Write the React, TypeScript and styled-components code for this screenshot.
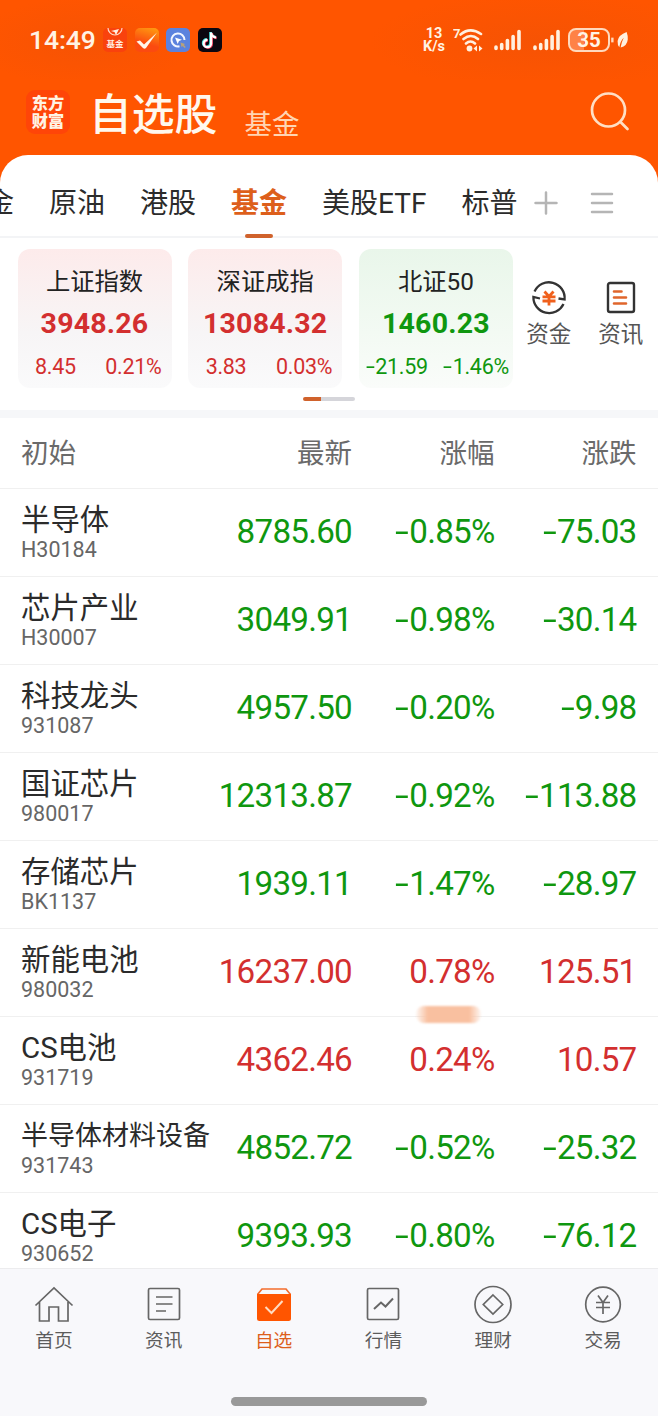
import React from 'react';
import styled, { createGlobalStyle } from 'styled-components';

const GREEN = '#0f970f';
const RED = '#d32f2f';
const ORANGE = '#ff5500';

const GlobalStyle = createGlobalStyle`
  * { box-sizing: border-box; }
  body {
    margin: 0;
    background: #fff;
    font-family: Roboto, 'Noto Sans CJK SC', sans-serif;
    color: #2b2b2b;
  }
`;

const Phone = styled.div`
  width: 658px;
  height: 1416px;
  display: flex;
  flex-direction: column;
  overflow: hidden;
  background: ${ORANGE};
`;

const StatusBar = styled.div`
  height: 80px;
  flex: none;
  display: flex;
  align-items: center;
  padding: 0 29px 0 29px;
  color: #fff3e4;
  background:
    radial-gradient(ellipse 110px 45px at 85px 42px, #f65304 0%, #ff550000 100%),
    radial-gradient(ellipse 170px 50px at 540px 42px, #f65304 0%, #ff550000 100%);
`;

const Clock = styled.span`
  width: 74px;
  font-size: 26.5px;
  font-weight: 500;
  line-height: 30px;
  letter-spacing: -0.1px;
  white-space: nowrap;
`;

const AppBadge = styled.svg`
  width: 24px;
  height: 24px;
  flex: none;
  margin-right: 7.5px;
`;

const StatusRight = styled.div`
  margin-left: auto;
  display: flex;
  align-items: center;
`;

const NetSpeed = styled.div`
  width: 24px;
  display: flex;
  flex-direction: column;
  align-items: center;
  font-size: 14.5px;
  font-weight: 700;
  line-height: 13px;
  margin-right: 7px;
  white-space: nowrap;
`;

const StatusIcon = styled.svg<{ $gap?: number }>`
  flex: none;
  display: block;
  margin-right: ${(p) => p.$gap ?? 0}px;
`;

const Battery = styled.div`
  width: 42px;
  height: 24px;
  border: 2px solid #ffd9bd;
  border-radius: 8px;
  background: linear-gradient(90deg, #ff8246 0 36%, transparent 36%);
  font-size: 20.5px;
  font-weight: 700;
  line-height: 21px;
  text-align: center;
`;

const TitleBar = styled.header`
  height: 75px;
  flex: none;
  display: flex;
  align-items: flex-start;
  padding: 0 27px 0 26px;
`;

const Logo = styled.div`
  width: 44px;
  height: 44px;
  margin-top: 10px;
  padding-top: 3px;
  border-radius: 9px;
  background: #ff4508;
  color: #fff3e4;
  font-family: 'Noto Sans CJK SC', sans-serif;
  font-size: 16.2px;
  font-weight: 900;
  line-height: 18px;
  text-align: center;
`;

const Title = styled.h1`
  margin: 7px 0 0 19px;
  font-size: 42.8px;
  font-weight: 500;
  line-height: 56px;
  color: #fff8ee;
`;

const SubTitle = styled.span`
  margin: 26px 0 0 27px;
  font-size: 27.5px;
  line-height: 38px;
  color: #ffd5b3;
`;

const SearchIcon = styled.svg`
  margin: 11px 0 0 auto;
`;

const Sheet = styled.main`
  flex: 1;
  min-height: 0;
  display: flex;
  flex-direction: column;
  overflow: hidden;
  background: #fff;
  border-radius: 28px 28px 0 0;
`;

const Tabs = styled.nav`
  height: 83px;
  flex: none;
  display: flex;
  align-items: stretch;
  gap: 35px;
  padding-top: 29px;
  border-bottom: 2px solid #f3f4f6;
`;

const Tab = styled.div<{ $active?: boolean; $cut?: boolean }>`
  flex: none;
  display: flex;
  flex-direction: column;
  align-items: center;
  justify-content: space-between;
  margin-left: ${(p) => (p.$cut ? -14 : 0)}px;
  font-size: 28px;
  line-height: 40px;
  white-space: nowrap;
  font-weight: ${(p) => (p.$active ? 700 : 400)};
  color: ${(p) => (p.$active ? '#dd5f1b' : '#2b2b2b')};
`;

const TabMark = styled.i`
  width: 28px;
  height: 4px;
  margin-bottom: -2px;
  border-radius: 2px;
  background: #d0622c;
`;

const TabTools = styled.div`
  display: flex;
  gap: 32px;
  padding-top: 7px;
  margin-left: -18px;
`;

const IndexStrip = styled.section`
  height: 149px;
  flex: none;
  display: flex;
  padding: 11px 0 0 17.5px;
`;

const IndexCards = styled.div`
  flex: none;
  display: flex;
  gap: 16.7px;
`;

const IndexCard = styled.div<{ $up: boolean }>`
  width: 154px;
  height: 139px;
  flex: none;
  padding-top: 16px;
  border-radius: 12px;
  text-align: center;
  color: ${(p) => (p.$up ? RED : GREEN)};
  background: ${(p) =>
    p.$up
      ? 'linear-gradient(#fdebeb, #f7f5f6 60%, #fafafb)'
      : 'linear-gradient(#e9f6ea, #f3faf3 60%, #fafcfa)'};
`;

const IndexName = styled.div`
  font-size: 24.3px;
  line-height: 34px;
  color: #222;
`;

const IndexValue = styled.div`
  margin-top: 8px;
  font-size: 28.5px;
  font-weight: 700;
  line-height: 34px;
  letter-spacing: 0.2px;
`;

const IndexChange = styled.div<{ $tight?: boolean }>`
  display: flex;
  justify-content: space-between;
  margin-top: 10px;
  padding: 0 ${(p) => (p.$tight ? '4px 0 9px' : '10px 0 17.5px')};
  font-size: 21.5px;
  line-height: 32px;
  letter-spacing: -0.3px;
`;

const Shortcut = styled.div`
  width: 72px;
  flex: none;
  display: flex;
  flex-direction: column;
  align-items: center;
  gap: 1px;
  padding-top: 30px;
  font-size: 22.5px;
  line-height: 32px;
  color: #555;
`;

const Pager = styled.div`
  width: 52px;
  height: 4px;
  flex: none;
  margin: 10px 0 9px 303px;
  border-radius: 2px;
  background: linear-gradient(90deg, #d0622c 0 18px, #d5d5da 18px);
`;

const Band = styled.div`
  height: 8px;
  flex: none;
  background: #f6f7f9;
`;

const Row = styled.div<{ $head?: boolean }>`
  height: ${(p) => (p.$head ? 71 : 88)}px;
  flex: none;
  display: grid;
  grid-template-columns: 191px 140px 142.5px 142px;
  align-items: center;
  padding: ${(p) => (p.$head ? '2px 20.5px 0 21px' : '0 20.5px 2px 21px')};
  border-bottom: 1px solid #f0f0f0;
`;

const HeadCell = styled.div<{ $right?: boolean }>`
  font-size: 27.5px;
  line-height: 40px;
  color: #6a6a6a;
  text-align: ${(p) => (p.$right ? 'right' : 'left')};
`;

const Stock = styled.div`
  white-space: nowrap;
`;

const StockName = styled.div<{ $long?: boolean }>`
  padding-top: 1px;
  margin-bottom: -1px;
  font-size: ${(p) => (p.$long ? 27 : 29.4)}px;
  line-height: 36px;
`;

const StockCode = styled.div`
  font-size: 21.5px;
  line-height: 26px;
  color: #666;
`;

const Figure = styled.div<{ $up: boolean }>`
  display: flex;
  justify-content: flex-end;
  font-size: 33.2px;
  line-height: 44px;
  letter-spacing: -0.75px;
  color: ${(p) => (p.$up ? RED : GREEN)};
`;

const Sign = styled.span`
  display: inline-block;
  transform: scaleX(1.5);
  transform-origin: 70% 50%;
  margin-right: 0.08em;
`;

const Smudge = styled.div`
  position: absolute;
  left: 416px;
  top: 1006px;
  width: 65px;
  height: 17px;
  border-radius: 8px;
  background: linear-gradient(90deg, #f9c4a420, #f9c0a0 18% 82%, #f9c4a420);
  filter: blur(1px);
`;

const List = styled.section`
  flex: 1;
  min-height: 0;
  overflow: hidden;
`;

const BottomBar = styled.footer`
  height: 148px;
  flex: none;
  background: #f8f8fb;
  border-top: 1px solid #ececee;
`;

const BottomNav = styled.nav`
  height: 128px;
  display: grid;
  grid-template-columns: repeat(6, 1fr);
  margin-left: -1px;
`;

const NavItem = styled.div<{ $active?: boolean }>`
  display: flex;
  flex-direction: column;
  align-items: center;
  padding-top: 16px;
  font-size: 18.7px;
  line-height: 26px;
  color: ${(p) => (p.$active ? '#dd5f1b' : '#5c5c5c')};
`;

const NavIcon = styled.svg`
  width: 40px;
  height: 40px;
  margin-bottom: 3px;
`;

const HomeBar = styled.div`
  width: 196px;
  height: 9px;
  margin: 0 auto;
  border-radius: 5px;
  background: #999;
`;

const Num = ({ value }: { value: string }) =>
  value.startsWith('-') ? (
    <span><Sign>-</Sign>{value.slice(1)}</span>
  ) : (
    <span>{value}</span>
  );

const Signal = ({ gap }: { gap: number }) => (
  <StatusIcon width="28" height="22" viewBox="0 0 28 22" $gap={gap}>
    <g stroke="#fff0df" strokeWidth="3.6" strokeLinecap="round">
      <path d="M2 18v1.500M7.700 15.500v4M13.400 11.500v8M19.100 7.500v12M25 2.500v17" />
    </g>
  </StatusIcon>
);

const indices = [
  { name: '上证指数', value: '3948.26', diff: '8.45', pct: '0.21%', up: true },
  { name: '深证成指', value: '13084.32', diff: '3.83', pct: '0.03%', up: true },
  { name: '北证50', value: '1460.23', diff: '-21.59', pct: '-1.46%', up: false },
];

const stocks = [
  ['半导体', 'H30184', '8785.60', '-0.85%', '-75.03'],
  ['芯片产业', 'H30007', '3049.91', '-0.98%', '-30.14'],
  ['科技龙头', '931087', '4957.50', '-0.20%', '-9.98'],
  ['国证芯片', '980017', '12313.87', '-0.92%', '-113.88'],
  ['存储芯片', 'BK1137', '1939.11', '-1.47%', '-28.97'],
  ['新能电池', '980032', '16237.00', '0.78%', '125.51'],
  ['CS电池', '931719', '4362.46', '0.24%', '10.57'],
  ['半导体材料设备', '931743', '4852.72', '-0.52%', '-25.32'],
  ['CS电子', '930652', '9393.93', '-0.80%', '-76.12'],
];

const navItems = [
  { label: '首页', icon: <path d="M1.500 20.500 20 3l18.500 17.500M5.500 17V36h9.500V22h9.500v14h9.500V17" /> },
  { label: '资讯', icon: <><rect x="4.500" y="3.500" width="31" height="31" rx="1.500" /><path d="M12 12h16.500M12 19h16.500M12 26h10" /></> },
  {
    label: '自选',
    icon: (
      <>
        <path d="M3.500 9.500 8 4h24l4.500 5.500" stroke="#f36c2c" />
        <path d="M3 9h34V33.500q0 2.500-2.500 2.500h-29Q3 36 3 33.500Z" fill="#ff5500" stroke="none" />
        <path d="m11.500 22 6 6 11-12" stroke="#ffdcc2" strokeWidth="2" />
      </>
    ),
  },
  { label: '行情', icon: <><rect x="4.500" y="3.500" width="31" height="31" rx="1.500" /><path d="m11 24 7-6.500 4.500 4L30 13.500" strokeWidth="2" /></> },
  { label: '理财', icon: <><circle cx="20" cy="19.500" r="18" /><path d="m20 10 9.700 9.500-9.700 9.500-9.700-9.500Z" /></> },
  { label: '交易', icon: <><circle cx="20" cy="19.500" r="17.300" /><path d="m15 10.500 5 7 5-7M20 17v12M13 17.500h14M13 22.500h14" /></> },
];

export default function App() {
  return (
    <Phone>
      <GlobalStyle />
      <StatusBar>
        <Clock>14:49</Clock>
        <AppBadge viewBox="0 0 24 24">
          <rect width="24" height="24" rx="5" fill="#f9420d" />
          <path d="M5 0a7 7 0 0 0 14 0" fill="none" stroke="#ffd9c4" strokeWidth="1.200" />
          <path d="m8 3 8-2-3 6-1.500-3Z" fill="#fff0e4" />
          <text x="12" y="19" textAnchor="middle" fontSize="8.500" fontWeight="700" fill="#fff0e4">基金</text>
        </AppBadge>
        <AppBadge viewBox="0 0 24 24">
          <defs>
            <linearGradient id="checkBg" x1="0.800" y1="0" x2="0.600" y2="0.700">
              <stop offset="0" stopColor="#ff9a10" />
              <stop offset="1" stopColor="#fb4a10" />
            </linearGradient>
          </defs>
          <rect width="24" height="24" rx="5" fill="url(#checkBg)" />
          <path d="M1.500 13.500 5 12.500l4 4L22 4.500 11 20Q9.500 21.500 8 20Z" fill="#fff5ea" />
        </AppBadge>
        <AppBadge viewBox="0 0 24 24">
          <rect width="24" height="24" rx="5" fill="#5b82de" />
          <path d="M13.500 18.300A6.500 6.500 0 1 1 18.500 12" fill="none" stroke="#f2f6ff" strokeWidth="2" />
          <path d="m9 9.500 7 2.200-3 1.300-1.300 3Z" fill="#fff" />
          <path d="m14.500 14.500 4.500 1.500-1.200 1 2 2-1.200 1-2-2-1 1.200Z" fill="#b9a27a" />
        </AppBadge>
        <AppBadge viewBox="0 0 24 24">
          <rect width="24" height="24" rx="5" fill="#0b0710" />
          <g fill="none" strokeWidth="2.600">
            <path d="M12.500 4v11a3.700 3.700 0 1 1-3.700-3.700M12.500 4.500q.8 4 5 4.500" stroke="#4be3e0" />
            <path d="M13.700 5v11A3.700 3.700 0 1 1 10 12.300M13.700 5.500q.8 4 5 4.500" stroke="#f13f62" />
            <path d="M13.100 4.500v11a3.700 3.700 0 1 1-3.700-3.700M13.100 5q.8 4 5 4.500" stroke="#fff" strokeWidth="2.200" />
          </g>
        </AppBadge>
        <StatusRight>
          <NetSpeed><span>13</span><span>K/s</span></NetSpeed>
          <StatusIcon width="30" height="26" viewBox="0 0 30 26" $gap={11}>
            <text x="0" y="10.500" fontSize="13" fontWeight="700" fill="#fff0df">7</text>
            <g fill="none" stroke="#fff0df" strokeWidth="2.600" strokeLinecap="round">
              <path d="M7.500 7.500Q17-.5 28 7M10.500 12q7.500-6 14.500 0M13 16.500q4.500-4 9 0" />
            </g>
            <circle cx="16.500" cy="21.500" r="2.900" fill="#fff0df" />
            <path d="m24 18.500-3.500 3 3.500 3ZM26 18.500l3.500 3-3.500 3Z" fill="#fff0df" />
          </StatusIcon>
          <Signal gap={11} />
          <Signal gap={7} />
          <Battery>35</Battery>
          <StatusIcon width="19" height="22" viewBox="0 0 20 22">
            <path d="M2.500 8.500v5" stroke="#ffd9bd" strokeWidth="2.500" />
            <path d="M17.500 2.500Q9 5.500 8 12q-.2 4.500 1.800 6.500 1-6.500 4.700-10-2.500 4.500-3.300 10.500 6.800-1.500 7.500-8.500.2-4.500-1.200-8Z" fill="#fff0df" />
          </StatusIcon>
        </StatusRight>
      </StatusBar>

      <TitleBar>
        <Logo>东方<br />财富</Logo>
        <Title>自选股</Title>
        <SubTitle>基金</SubTitle>
        <SearchIcon width="42" height="42" viewBox="0 0 42 42" fill="none" stroke="#ffdfc4" strokeWidth="2.700" strokeLinecap="round">
          <circle cx="19.500" cy="19" r="16.500" />
          <path d="m31.500 31 7 7" />
        </SearchIcon>
      </TitleBar>

      <Sheet>
        <Tabs>
          <Tab $cut>金</Tab>
          <Tab>原油</Tab>
          <Tab>港股</Tab>
          <Tab $active>基金<TabMark /></Tab>
          <Tab>美股ETF</Tab>
          <Tab>标普</Tab>
          <TabTools>
            <svg width="24" height="24" viewBox="0 0 24 24" stroke="#b5b5b5" strokeWidth="2.500" strokeLinecap="round">
              <path d="M1.500 12h21M12 1.500v21" />
            </svg>
            <svg width="24" height="24" viewBox="0 0 24 24" stroke="#b5b5b5" strokeWidth="2.500" strokeLinecap="round">
              <path d="M2 3h20M2 12h20M2 21h20" />
            </svg>
          </TabTools>
        </Tabs>

        <IndexStrip>
          <IndexCards>
            {indices.map((i) => (
              <IndexCard key={i.name} $up={i.up}>
                <IndexName>{i.name}</IndexName>
                <IndexValue>{i.value}</IndexValue>
                <IndexChange $tight={!i.up}>
                  <Num value={i.diff} />
                  <Num value={i.pct} />
                </IndexChange>
              </IndexCard>
            ))}
          </IndexCards>
          <Shortcut>
            <svg width="38" height="38" viewBox="0 0 38 38" fill="none" stroke="#333" strokeWidth="2.300">
              <path d="M4.500 12.500A15.800 15.800 0 0 1 34.600 20.500L28.500 19.500M33.500 25A15.800 15.800 0 0 1 3.400 18L10 19.500" />
              <path d="m14.500 12.500 4.500 5 4.500-5M12.500 17.800h13M12.500 22h13M19 17.500V26.500" stroke="#f0601c" strokeWidth="2.800" />
            </svg>
            资金
          </Shortcut>
          <Shortcut>
            <svg width="38" height="38" viewBox="0 0 38 38" fill="none" stroke="#333" strokeWidth="2.400" strokeLinecap="round">
              <rect x="6" y="4" width="26" height="29" rx="2" />
              <path d="M12 12.500h7.500M12 18.500h12M12 24.500h12" stroke="#e0662c" strokeWidth="2.600" />
            </svg>
            资讯
          </Shortcut>
        </IndexStrip>
        <Pager />
        <Band />

        <Row $head>
          <HeadCell>初始</HeadCell>
          <HeadCell $right>最新</HeadCell>
          <HeadCell $right>涨幅</HeadCell>
          <HeadCell $right>涨跌</HeadCell>
        </Row>
        <List>
          {stocks.map(([name, code, last, pct, diff]) => {
            const up = !pct.startsWith('-');
            return (
              <Row key={code}>
                <Stock>
                  <StockName $long={name.length > 5}>{name}</StockName>
                  <StockCode>{code}</StockCode>
                </Stock>
                <Figure $up={up}><Num value={last} /></Figure>
                <Figure $up={up}><Num value={pct} /></Figure>
                <Figure $up={up}><Num value={diff} /></Figure>
              </Row>
            );
          })}
        </List>
      </Sheet>
      <Smudge />

      <BottomBar>
        <BottomNav>
          {navItems.map((n) => (
            <NavItem key={n.label} $active={n.label === '自选'}>
              <NavIcon viewBox="0 0 40 40" fill="none" stroke="#666" strokeWidth="1.700">{n.icon}</NavIcon>
              {n.label}
            </NavItem>
          ))}
        </BottomNav>
        <HomeBar />
      </BottomBar>
    </Phone>
  );
}
